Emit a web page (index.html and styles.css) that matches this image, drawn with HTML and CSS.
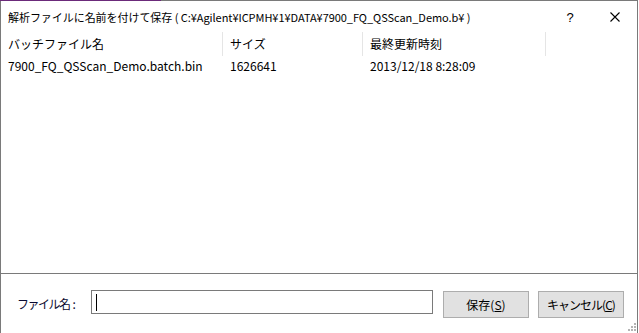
FILE: index.html
```html
<!DOCTYPE html>
<html lang="ja">
<head>
<meta charset="utf-8">
<link rel="stylesheet" href="styles.css">
</head>
<body>
<div class="window">
  <div class="titlebar">
    <div class="title">解析ファイルに名前を付けて保存 ( C:¥Agilent¥ICPMH¥1¥DATA¥7900_FQ_QSScan_Demo.b¥ )</div>
    <div class="help">?</div>
    <div class="close">
      <svg width="10" height="10" viewBox="0 0 10 10"><path d="M0.5 0.5 L9.5 9.5 M9.5 0.5 L0.5 9.5" stroke="#000" stroke-width="1.1" fill="none"/></svg>
    </div>
  </div>
  <div class="list">
    <div class="row header">
      <div class="cell c1">バッチファイル名</div>
      <div class="cell c2">サイズ</div>
      <div class="cell c3">最終更新時刻</div>
    </div>
    <div class="row item">
      <div class="cell c1">7900_FQ_QSScan_Demo.batch.bin</div>
      <div class="cell c2">1626641</div>
      <div class="cell c3">2013/12/18 8:28:09</div>
    </div>
  </div>
  <div class="footer">
    <label class="fname">ファイル名<span class="colon">:</span></label>
    <div class="input"><span class="caret"></span></div>
    <button class="btn save">保存(<u>S</u>)</button>
    <button class="btn cancel">キャンセル(<u>C</u>)</button>
    <div class="grip">
      <svg width="9" height="9" viewBox="0 0 9 9" fill="#b4b4b4">
        <rect x="7" y="1" width="2" height="2"/>
        <rect x="4" y="4" width="2" height="2"/><rect x="7" y="4" width="2" height="2"/>
        <rect x="1" y="7" width="2" height="2"/><rect x="4" y="7" width="2" height="2"/><rect x="7" y="7" width="2" height="2"/>
      </svg>
    </div>
  </div>
</div>
</body>
</html>
```
FILE: styles.css
```css
html, body {
  margin: 0;
  padding: 0;
  background: #fff;
}
body {
  font-family: "Noto Sans CJK JP", "Noto Sans", sans-serif;
  font-size: 12px;
  color: #000;
  overflow: hidden;
}
.window {
  width: 636px;
  height: 340px;
  border-left: 1px solid #7a7a7a;
  border-right: 1px solid #7a7a7a;
  border-top: 1px solid #7a7a7a;
  background: #fff;
  display: flex;
  flex-direction: column;
  position: relative;
}
.window::before {
  content: "";
  position: absolute;
  left: -1px;
  top: -1px;
  width: 161px;
  height: 1px;
  background: #6b2a7a;
}
.titlebar {
  height: 30px;
  display: flex;
  align-items: center;
}
.title {
  flex: 1;
  padding-left: 7px;
  line-height: 16px;
  margin-top: 2px;
  white-space: nowrap;
  font-size: 11px;
  letter-spacing: -0.05px;
}
.help {
  width: 20px;
  text-align: center;
  margin-right: 30px;
  font-family: "Liberation Sans", sans-serif;
  font-size: 13px;
  margin-top: 2px;
}
.close {
  width: 10px;
  height: 10px;
  margin-right: 17px;
  margin-top: 2px;
}
.close svg { display: block; }
.list {
  flex: 0 0 242px;
  border-bottom: 1px solid #7a7a7a;
  display: flex;
  flex-direction: column;
}
.row {
  display: flex;
}
.header {
  height: 24px;
  margin-top: 1px;
}
.header .cell {
  border-right: 1px solid #e5e5e5;
  line-height: 24px;
}
.item {
  height: 20px;
}
.item .cell {
  line-height: 20px;
  border-right: 1px solid transparent;
}
.cell {
  padding-left: 7px;
  white-space: nowrap;
  box-sizing: border-box;
}
.c1 { width: 222px; }
.c2 { width: 140px; }
.c3 { width: 183px; }
.footer {
  flex: 1;
  display: flex;
  align-items: flex-start;
  position: relative;
}
.fname {
  margin-left: 16px;
  margin-top: 22px;
  width: 74px;
  line-height: 16px;
  letter-spacing: -1.5px;
  color: #0a0a30;
  white-space: nowrap;
}
.colon {
  letter-spacing: 0;
  margin-left: 3px;
}
.input {
  margin-top: 16px;
  width: 340px;
  height: 22px;
  border: 1px solid #7a7a7a;
  position: relative;
  box-sizing: content-box;
}
.caret {
  position: absolute;
  left: 4px;
  top: 3px;
  width: 1px;
  height: 17px;
  background: #000;
}
.btn {
  margin-top: 17px;
  height: 27px;
  width: 86px;
  background: #e1e1e1;
  border: 1px solid #adadad;
  font-family: inherit;
  font-size: 12px;
  color: #000;
  padding: 0;
  box-sizing: border-box;
}
.save { margin-left: 10px; }
.cancel { margin-left: 9px; letter-spacing: -1px; }
.grip {
  position: absolute;
  right: 1px;
  top: 48px;
  width: 9px;
  height: 9px;
}
.grip svg { display: block; }
```
